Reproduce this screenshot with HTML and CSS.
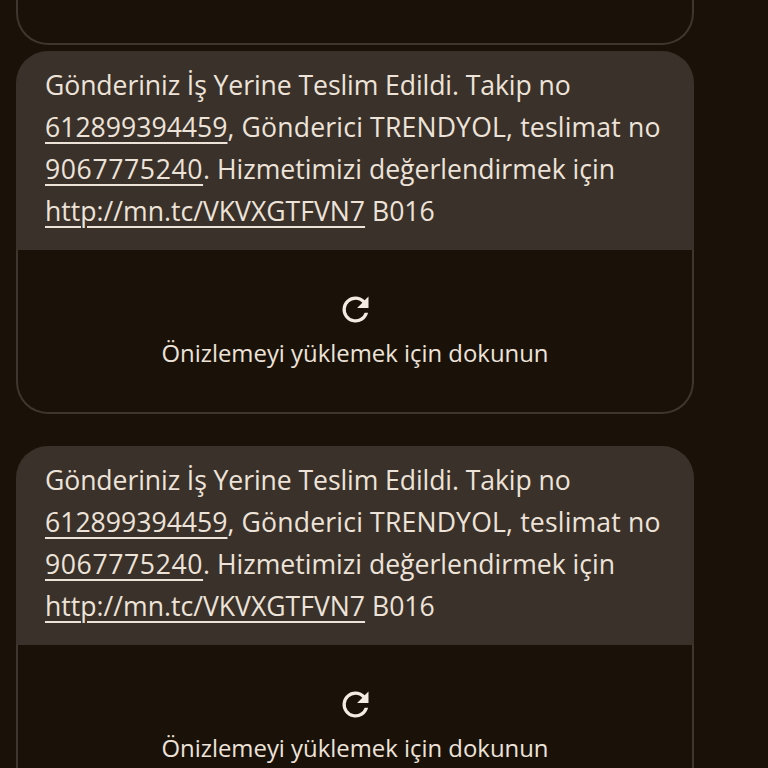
FILE: index.html
```html
<!DOCTYPE html>
<html lang="tr">
  <head>
    <meta charset="UTF-8" />
    <meta name="viewport" content="width=device-width, initial-scale=1.0" />
    <title>Mesajlar</title>
    <link rel="stylesheet" href="styles.css">
  </head>
  <body>
    <div class="thread">
      <!-- previous message, scrolled off the top -->
      <div class="preview preview-cut"></div>

      <div class="message message-first">
        <div class="bubble">
          <div class="line line-tight">Gönderiniz İş Yerine Teslim Edildi. Takip no</div>
          <div class="line"><span class="link">612899394459</span><span class="wide">, Gönderici TRENDYOL, teslimat no</span></div>
          <div class="line"><span class="link link-wide">9067775240</span>. Hizmetimizi değerlendirmek için</div>
          <div class="line"><span class="link">http://mn.tc/VKVXGTFVN7</span> B016</div>
        </div>
        <div class="preview">
          <svg class="reload" viewBox="0 0 24 24"><path d="M17.65 6.35A7.96 7.96 0 0 0 12 4a8 8 0 1 0 7.75 10h-2.08A6 6 0 1 1 12 6c1.66 0 3.14.69 4.22 1.78L13 11h7V4l-2.35 2.35z"/></svg>
          <div class="preview-label">Önizlemeyi yüklemek için dokunun</div>
        </div>
      </div>

      <div class="message">
        <div class="bubble">
          <div class="line line-tight">Gönderiniz İş Yerine Teslim Edildi. Takip no</div>
          <div class="line"><span class="link">612899394459</span><span class="wide">, Gönderici TRENDYOL, teslimat no</span></div>
          <div class="line"><span class="link link-wide">9067775240</span>. Hizmetimizi değerlendirmek için</div>
          <div class="line"><span class="link">http://mn.tc/VKVXGTFVN7</span> B016</div>
        </div>
        <div class="preview">
          <svg class="reload" viewBox="0 0 24 24"><path d="M17.65 6.35A7.96 7.96 0 0 0 12 4a8 8 0 1 0 7.75 10h-2.08A6 6 0 1 1 12 6c1.66 0 3.14.69 4.22 1.78L13 11h7V4l-2.35 2.35z"/></svg>
          <div class="preview-label">Önizlemeyi yüklemek için dokunun</div>
        </div>
      </div>
    </div>
  </body>
</html>
```

FILE: styles.css
```css
/* Message thread, dark theme */
body {
  margin: 0;
  height: 768px;
  overflow: hidden;
  background-color: #1a1209;
  font-family: "Open Sans", "Liberation Sans", sans-serif;
  color: #ede3d9;
}

.thread {
  width: 678px;
  margin-left: 16px;
}

.message {
  margin-top: 32px;
}

.message-first {
  margin-top: 6px;
}

.bubble {
  height: 199px;
  box-sizing: border-box;
  padding: 13px 29px 0 29px;
  background-color: #3a312a;
  border-radius: 32px 32px 0 0;
  font-size: 26.6px;
  line-height: 42px;
  white-space: nowrap;
}

/* small spacing nudges so each line ends where it should */
.line-tight {
  letter-spacing: -0.09px;
}

.wide {
  letter-spacing: 0.17px;
}

.link {
  text-decoration: underline;
  text-decoration-thickness: 2px;
  text-underline-offset: 5px;
}

.link-wide {
  letter-spacing: 0.6px;
}

.preview {
  height: 164px;
  box-sizing: border-box;
  display: flex;
  flex-direction: column;
  align-items: center;
  padding-top: 40px;
  border: 2px solid #3f372f;
  border-top: none;
  border-radius: 0 0 32px 32px;
}

.preview-cut {
  height: 45px;
}

.reload {
  width: 39px;
  height: 39px;
  fill: #f4ece3;
}

.preview-label {
  margin-top: 8px;
  font-size: 23.9px;
  line-height: 32px;
  font-weight: 500;
  white-space: nowrap;
}
```
